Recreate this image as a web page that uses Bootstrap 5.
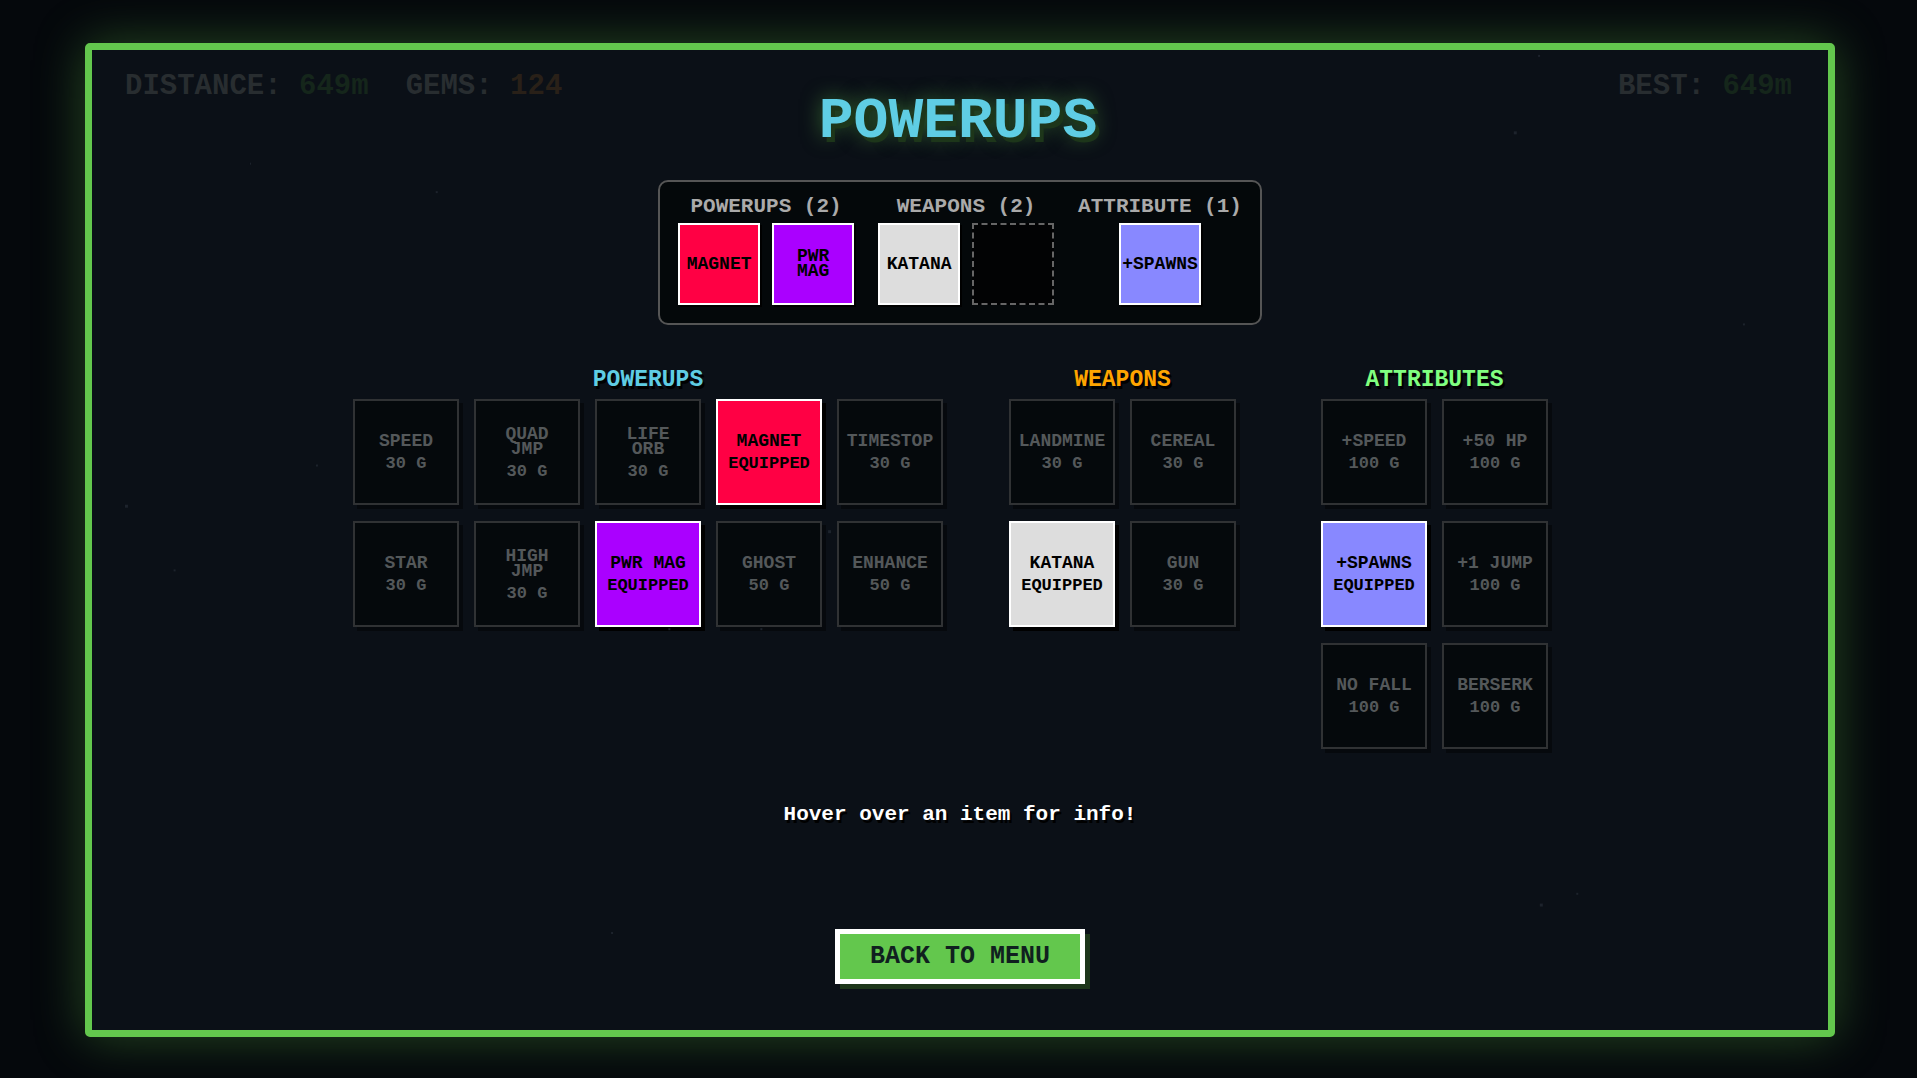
<!DOCTYPE html>
<html lang="en">
<head>
<meta charset="utf-8">
<meta name="viewport" content="width=device-width, initial-scale=1">
<title>Powerups</title>
<link rel="stylesheet" href="https://cdn.jsdelivr.net/npm/bootstrap@5.3.0/dist/css/bootstrap.min.css">
<style>
  :root { --green: #63c74d; --cyan: #5fcde4; }
  body { background: #05080c; color: #fff; font-family: "Liberation Mono", "DejaVu Sans Mono", monospace; font-weight: 700; padding: 43px 82px 41px 85px; }
  .game-frame { border: 7px solid var(--green); border-radius: 5px; background: #0b1017; box-shadow: 0 0 50px rgba(99,199,77,.34); }
  .starfield { inset: 0; width: 100%; height: 100%; fill: #1d232c; pointer-events: none; }
  .hud { padding: 22px 36px 0 33px; font-size: 29px; line-height: 30px; color: #282d30; }
  .hud-left { column-gap: 37px; }
  .hud-dist { color: #15261b; }
  .hud-gems { color: #292018; }
  .screen-title { margin: 2px 4px 0 0; font-size: 58px; line-height: 36px; font-weight: 700; color: var(--cyan); text-shadow: 4px 5px 0 #1d361a, 0 0 20px rgba(99,199,77,.5); }
  .loadout { margin-top: 40px; border: 2px solid #555; border-radius: 10px; background: #04080a; padding: 14px 18px 18px; column-gap: 24px; }
  .loadout-title { font-size: 21px; line-height: 22px; margin: 0 0 5px; font-weight: 700; color: #aaa; }
  .slots { gap: 12px; }
  .slot, .tile { border: 2px solid #fff; color: #000; font-size: 18px; line-height: 15px; font-weight: 700; }
  .slot { width: 82px; height: 82px; box-shadow: 2px 2px 0 #000; }
  .slot-empty { border: 2px dashed #666; background: #020304; box-shadow: none; }
  .shop { margin-top: 43px; column-gap: 66px; }
  .shop-attr { padding: 0 19px; }
  .shop-title { font-size: 23px; line-height: 24px; margin: 0 0 7px; font-weight: 700; text-shadow: 2px 3px 0 #000; }
  .tiles { display: grid; grid-template-columns: repeat(2, 106px); gap: 16px 15px; }
  .tiles-wide { grid-template-columns: repeat(5, 106px); }
  .tile { height: 106px; padding: 0; gap: 8px; box-shadow: 4px 4px 0 #000; }
  .tile-off { border-color: #303234; background: #05090c; color: #54585a; box-shadow: 4px 4px 0 #06090d; }
  .tile-cost { font-size: 17px; line-height: 13px; }
  .c-cyan { color: var(--cyan); } .c-orange { color: #ffa500; } .c-green { color: #80ff80; }
  .bg-magnet { background: #ff0044; } .bg-pwr { background: #aa00ff; } .bg-katana { background: #ddd; } .bg-spawns { background: #8888ff; }
  .hint { margin: 55px 0 0; font-size: 21px; line-height: 22px; text-shadow: 2px 3px 0 #000; }
  .back-btn { margin: 103px 0 46px; border: 5px solid #fff; background: var(--green); color: #10201f; font-size: 25px; line-height: 25px; padding: 10px 30px; font-weight: 700; box-shadow: 5px 5px 0 #1d361a; }
</style>
</head>
<body class="min-vh-100 d-flex">
<main class="game-frame flex-fill position-relative d-flex flex-column align-items-center">
  <svg class="starfield position-absolute" aria-hidden="true">
    <rect x="81.9%" y="8.3%" width="3" height="3"/><rect x="1.9%" y="46.4%" width="3" height="3"/>
    <rect x="12.9%" y="42.3%" width="2" height="2"/><rect x="83.4%" y="87.1%" width="3" height="3"/>
    <rect x="85.5%" y="86%" width="2" height="2"/><rect x="42.4%" y="49%" width="3" height="3"/>
    <rect x="29.9%" y="90%" width="2" height="2"/><rect x="95.1%" y="27.9%" width="2" height="2"/>
    <rect x="19.8%" y="14.4%" width="2" height="2"/><rect x="83.3%" y=".5%" width="2" height="2"/>
    <rect x="33.2%" y="59%" width="2" height="2"/><rect x="38.5%" y="59%" width="2" height="2"/>
    <rect x="9.1%" y="11.5%" width="1" height="2"/><rect x="4.7%" y="53%" width="2" height="2"/>
  </svg>
  <header class="hud w-100 d-flex justify-content-between">
    <div class="hud-left d-flex flex-wrap">
      <span>DISTANCE: <span class="hud-dist">649m</span></span>
      <span>GEMS: <span class="hud-gems">124</span></span>
    </div>
    <span>BEST: <span class="hud-dist">649m</span></span>
  </header>
  <h1 class="screen-title">POWERUPS</h1>

  <section class="loadout d-flex" aria-label="Loadout">
    <div class="d-flex flex-column align-items-center">
      <h2 class="loadout-title">POWERUPS (2)</h2>
      <div class="slots d-flex">
        <div class="slot bg-magnet d-flex align-items-center justify-content-center text-center">MAGNET</div>
        <div class="slot bg-pwr d-flex align-items-center justify-content-center text-center">PWR<br>MAG</div>
      </div>
    </div>
    <div class="d-flex flex-column align-items-center">
      <h2 class="loadout-title">WEAPONS (2)</h2>
      <div class="slots d-flex">
        <div class="slot bg-katana d-flex align-items-center justify-content-center text-center">KATANA</div>
        <div class="slot slot-empty"></div>
      </div>
    </div>
    <div class="d-flex flex-column align-items-center">
      <h2 class="loadout-title">ATTRIBUTE (1)</h2>
      <div class="slots d-flex">
        <div class="slot bg-spawns d-flex align-items-center justify-content-center text-center">+SPAWNS</div>
      </div>
    </div>
  </section>

  <div class="shop d-flex align-items-start">
    <section class="text-center">
      <h2 class="shop-title c-cyan">POWERUPS</h2>
      <div class="tiles tiles-wide">
        <button type="button" class="tile tile-off d-flex flex-column align-items-center justify-content-center"><span>SPEED</span><span class="tile-cost">30 G</span></button>
        <button type="button" class="tile tile-off d-flex flex-column align-items-center justify-content-center"><span>QUAD<br>JMP</span><span class="tile-cost">30 G</span></button>
        <button type="button" class="tile tile-off d-flex flex-column align-items-center justify-content-center"><span>LIFE<br>ORB</span><span class="tile-cost">30 G</span></button>
        <button type="button" class="tile bg-magnet d-flex flex-column align-items-center justify-content-center"><span>MAGNET</span><span class="tile-cost">EQUIPPED</span></button>
        <button type="button" class="tile tile-off d-flex flex-column align-items-center justify-content-center"><span>TIMESTOP</span><span class="tile-cost">30 G</span></button>
        <button type="button" class="tile tile-off d-flex flex-column align-items-center justify-content-center"><span>STAR</span><span class="tile-cost">30 G</span></button>
        <button type="button" class="tile tile-off d-flex flex-column align-items-center justify-content-center"><span>HIGH<br>JMP</span><span class="tile-cost">30 G</span></button>
        <button type="button" class="tile bg-pwr d-flex flex-column align-items-center justify-content-center"><span>PWR MAG</span><span class="tile-cost">EQUIPPED</span></button>
        <button type="button" class="tile tile-off d-flex flex-column align-items-center justify-content-center"><span>GHOST</span><span class="tile-cost">50 G</span></button>
        <button type="button" class="tile tile-off d-flex flex-column align-items-center justify-content-center"><span>ENHANCE</span><span class="tile-cost">50 G</span></button>
      </div>
    </section>
    <section class="text-center">
      <h2 class="shop-title c-orange">WEAPONS</h2>
      <div class="tiles">
        <button type="button" class="tile tile-off d-flex flex-column align-items-center justify-content-center"><span>LANDMINE</span><span class="tile-cost">30 G</span></button>
        <button type="button" class="tile tile-off d-flex flex-column align-items-center justify-content-center"><span>CEREAL</span><span class="tile-cost">30 G</span></button>
        <button type="button" class="tile bg-katana d-flex flex-column align-items-center justify-content-center"><span>KATANA</span><span class="tile-cost">EQUIPPED</span></button>
        <button type="button" class="tile tile-off d-flex flex-column align-items-center justify-content-center"><span>GUN</span><span class="tile-cost">30 G</span></button>
      </div>
    </section>
    <section class="shop-attr text-center">
      <h2 class="shop-title c-green">ATTRIBUTES</h2>
      <div class="tiles">
        <button type="button" class="tile tile-off d-flex flex-column align-items-center justify-content-center"><span>+SPEED</span><span class="tile-cost">100 G</span></button>
        <button type="button" class="tile tile-off d-flex flex-column align-items-center justify-content-center"><span>+50 HP</span><span class="tile-cost">100 G</span></button>
        <button type="button" class="tile bg-spawns d-flex flex-column align-items-center justify-content-center"><span>+SPAWNS</span><span class="tile-cost">EQUIPPED</span></button>
        <button type="button" class="tile tile-off d-flex flex-column align-items-center justify-content-center"><span>+1 JUMP</span><span class="tile-cost">100 G</span></button>
        <button type="button" class="tile tile-off d-flex flex-column align-items-center justify-content-center"><span>NO FALL</span><span class="tile-cost">100 G</span></button>
        <button type="button" class="tile tile-off d-flex flex-column align-items-center justify-content-center"><span>BERSERK</span><span class="tile-cost">100 G</span></button>
      </div>
    </section>
  </div>

  <p class="hint">Hover over an item for info!</p>
  <button type="button" class="back-btn">BACK TO MENU</button>
</main>
<script src="https://cdn.jsdelivr.net/npm/bootstrap@5.3.0/dist/js/bootstrap.bundle.min.js"></script>
</body>
</html>
